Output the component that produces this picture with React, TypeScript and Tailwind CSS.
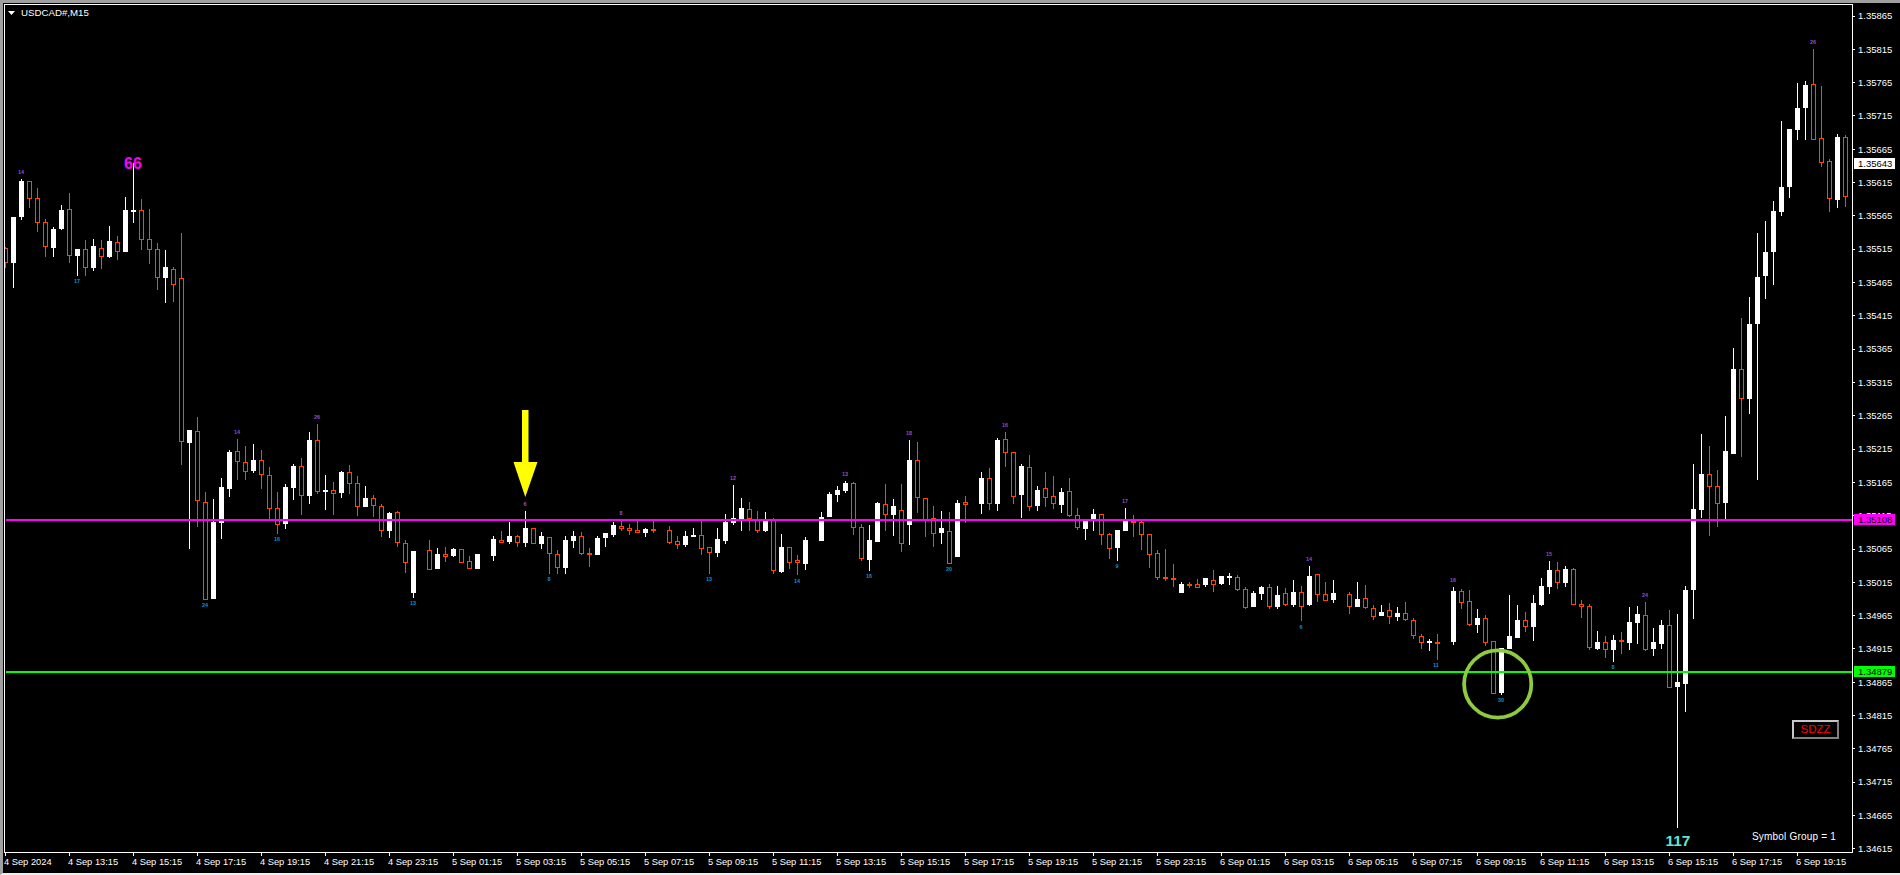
const W = 1, O = 0;
type C = [number, number, number, number, number, number];
// [type, centre x, high, body top, body bottom, low]
const candles: C[] = [
[O,5,247,248,263,268],[W,13,217,217,263,288],[W,21,179,181,217,220],[O,29,181,181,199,208],[O,37,188,198,223,232],[O,45,219,222,247,257],[W,53,227,229,248,257],[W,61,205,210,229,230],[O,69,193,209,256,263],[W,77,249,249,256,276],[O,85,240,249,268,276],[W,93,239,246,268,271],[O,101,240,248,257,269],[W,109,226,241,257,258],[O,117,236,242,252,260],[W,125,197,210,252,252],[W,133,163,210,212,223],[O,141,199,210,240,250],[O,149,209,239,250,264],[O,157,243,249,278,290],[W,165,250,267,278,303],[O,173,267,269,285,302],[O,181,233,278,442,465],[W,189,430,430,443,549],[O,197,417,431,501,527],[O,205,492,502,600,600],[W,213,499,522,599,599],[W,221,478,487,523,539],[W,229,450,452,489,497],[O,237,439,451,462,480],[O,245,446,462,472,480],[W,253,444,460,471,473],[O,261,450,460,475,489],[O,269,467,475,509,520],[O,277,492,508,525,534],[W,285,484,487,524,529],[W,293,464,466,488,500],[O,301,458,466,496,515],[W,309,432,440,496,504],[O,317,424,440,492,494],[W,325,475,490,492,510],[O,333,482,490,494,515],[W,341,471,472,493,498],[O,349,465,472,484,494],[O,357,476,483,507,516],[W,365,486,498,507,507],[O,373,495,498,506,517],[O,381,504,506,531,537],[W,389,512,513,531,538],[O,397,511,512,543,547],[O,405,540,543,563,573],[W,413,551,551,593,598],
[O,429,540,550,570,570],[W,437,548,554,569,569],[O,445,547,554,557,562],[W,453,548,549,556,557],[O,461,549,549,563,563],[O,469,556,561,569,569],[W,477,554,554,569,569],
[W,493,536,539,556,561],[O,501,531,540,543,543],[W,509,522,536,542,544],[O,517,535,536,543,547],[W,525,511,528,543,547],[O,533,528,528,544,544],[W,541,532,536,544,549],[O,549,537,537,554,574],[O,557,550,554,568,574],[W,565,536,540,568,574],[W,573,531,536,541,548],[O,581,532,536,554,555],[O,589,548,553,555,567],[W,597,536,538,555,555],[W,605,533,533,538,547],[W,613,522,525,535,537],[O,621,521,526,529,531],[O,629,524,528,531,535],[O,637,520,530,533,533],[W,645,528,529,533,537],[O,653,521,529,531,533],
[O,669,526,530,543,544],[O,677,536,541,545,549],[W,685,531,536,545,547],[W,693,528,535,537,537],[O,701,520,535,549,555],[O,709,547,547,553,574],[W,717,528,539,553,557],[W,725,514,522,541,544],[W,733,485,518,523,525],[W,741,498,508,520,531],[O,749,502,509,519,531],[O,757,511,519,531,533],[W,765,512,521,531,532],[O,773,518,520,571,574],[W,781,534,547,572,573],[O,789,547,547,563,569],[O,797,555,560,563,575],[W,805,537,540,564,570],
[W,821,512,517,541,541],[W,829,492,494,517,517],[W,837,486,490,495,502],[W,845,481,483,491,493],[O,853,482,483,528,535],[O,861,524,527,559,561],[W,869,525,540,560,571],[W,877,502,503,542,542],[O,885,484,504,515,531],[W,893,499,506,515,536],[O,901,484,510,544,552],[W,909,440,460,525,545],[O,917,442,460,498,513],[O,925,498,498,520,537],[O,933,506,518,534,547],[W,941,511,528,533,544],[O,949,512,531,564,564],[W,957,500,503,557,557],[O,965,496,502,505,523],
[W,981,472,478,504,514],[O,989,468,478,504,510],[W,997,438,440,504,511],[O,1005,432,439,453,467],[O,1013,452,452,497,504],[W,1021,464,466,495,518],[O,1029,455,467,507,511],[W,1037,486,490,506,511],[O,1045,472,488,498,507],[O,1053,476,496,504,509],[W,1061,488,492,505,513],[O,1069,478,491,516,517],[O,1077,508,515,528,530],[W,1085,520,520,529,540],[W,1093,509,514,521,531],[O,1101,514,514,535,545],[O,1109,533,534,549,559],[W,1117,530,530,548,561],[W,1125,508,520,531,531],[O,1133,515,521,523,537],[O,1141,521,522,535,550],[O,1149,534,534,555,568],[O,1157,550,553,578,580],[O,1165,549,577,579,581],[O,1173,564,578,580,587],[W,1181,582,584,593,593],[O,1189,582,584,586,588],[O,1197,579,584,588,588],[W,1205,578,578,585,587],[O,1213,570,580,585,592],[W,1221,576,576,584,585],[W,1229,573,576,578,585],[O,1237,575,577,590,591],[O,1245,587,589,608,609],[W,1253,591,593,607,607],[W,1261,586,587,594,600],[O,1269,584,587,607,609],[W,1277,586,595,607,609],[O,1285,588,593,605,606],[W,1293,580,592,605,607],[O,1301,586,592,607,621],[W,1309,566,576,605,606],[O,1317,574,574,595,602],[O,1325,582,594,601,601],[W,1333,580,593,600,603],
[O,1349,592,594,607,614],[W,1357,582,599,607,607],[O,1365,585,598,608,609],[O,1373,605,608,617,620],[W,1381,605,612,616,616],[O,1389,603,610,617,624],[W,1397,607,613,617,621],[O,1405,602,613,620,621],[O,1413,618,620,636,639],[O,1421,634,636,643,649],[W,1429,639,641,643,651],[O,1437,634,642,643,660],
[W,1453,587,591,642,645],[O,1461,589,591,603,609],[O,1469,590,601,625,626],[W,1477,609,618,625,633],[O,1485,615,618,643,646],[O,1493,641,641,694,694],[W,1501,648,648,693,695],[W,1509,595,636,649,649],[W,1517,605,620,638,638],[O,1525,612,620,627,632],[W,1533,595,603,627,641],[W,1541,578,586,605,606],[W,1549,561,570,587,594],[O,1557,562,570,583,589],[W,1565,566,569,583,587],[O,1573,568,569,605,605],[O,1581,600,604,607,618],[O,1589,604,606,648,650],[W,1597,631,642,649,650],[O,1605,636,642,650,658],[W,1613,635,640,650,662],[O,1621,632,640,642,654],[W,1629,607,622,643,650],[W,1637,606,614,623,644],[O,1645,602,615,650,651],[W,1653,628,642,649,656],[W,1661,620,625,644,649],[O,1669,610,625,688,688],[W,1677,614,682,687,828],[W,1685,586,590,684,712],[W,1693,464,509,590,619],[W,1701,434,474,510,518],[O,1709,446,474,487,536],[O,1717,470,486,504,527],[W,1725,416,451,503,520],[W,1733,348,369,454,454],[O,1741,318,369,399,457],[W,1749,297,324,399,414],[W,1757,233,277,324,480],[W,1765,221,252,276,299],[W,1773,201,211,252,285],[W,1781,121,187,212,216],[W,1789,129,129,187,198],[W,1797,83,108,130,140],[W,1805,81,85,108,140],[O,1813,49,84,140,140],[O,1821,86,138,163,167],[O,1829,159,161,199,212],[W,1837,134,137,200,208],[O,1845,135,137,197,207],
];

const topLabels: [number, number, string][] = [
[21,174,"14"],[237,434,"14"],[317,419,"26"],[525,506,"6"],[621,515,"8"],[733,480,"12"],[845,476,"13"],[909,435,"18"],[1005,427,"16"],[1125,503,"17"],[1309,561,"14"],[1453,582,"16"],[1549,556,"15"],[1645,597,"24"],[1813,44,"26"],
];
const bottomLabels: [number, number, string][] = [
[77,283,"17"],[277,541,"16"],[205,607,"24"],[413,605,"13"],[549,581,"8"],[709,581,"13"],[797,583,"14"],[869,578,"16"],[949,571,"20"],[1117,568,"9"],[1301,629,"6"],[1436,667,"11"],[1501,702,"30"],[1613,669,"8"],
];

const prices = Array.from({ length: 26 }, (_, i) => (1.35865 - i * 0.0005).toFixed(5));
const times = [
  "4 Sep 2024","4 Sep 13:15","4 Sep 15:15","4 Sep 17:15","4 Sep 19:15","4 Sep 21:15","4 Sep 23:15",
  "5 Sep 01:15","5 Sep 03:15","5 Sep 05:15","5 Sep 07:15","5 Sep 09:15","5 Sep 11:15","5 Sep 13:15","5 Sep 15:15","5 Sep 17:15","5 Sep 19:15","5 Sep 21:15","5 Sep 23:15",
  "6 Sep 01:15","6 Sep 03:15","6 Sep 05:15","6 Sep 07:15","6 Sep 09:15","6 Sep 11:15","6 Sep 13:15","6 Sep 15:15","6 Sep 17:15","6 Sep 19:15",
];

const ORANGE = "#ff4500";
const FONT = "'Liberation Sans', sans-serif";

function Candle({ c }: { c: C }) {
  const [t, x, h, top, bot, l] = c;
  const color = t === W ? "#ffffff" : ORANGE;
  return (
    <g shapeRendering="crispEdges">
      <rect x={x} y={h} width={1} height={Math.max(l - h, 1)} fill={color} />
      {t === W ? (
        <rect x={x - 2} y={top} width={5} height={Math.max(bot - top, 2)} fill="#ffffff" />
      ) : (
        <rect x={x - 1.5} y={top + 0.5} width={4} height={Math.max(bot - top - 1, 1)} fill="#000000" stroke={ORANGE} strokeWidth={1} />
      )}
    </g>
  );
}

function PriceTag({ top, bg, label }: { top: string; bg: string; label: string }) {
  return (
    <div className={`absolute left-px w-[41px] h-[11px] pl-[4px] flex items-center text-black text-[9.5px] leading-none ${top} ${bg}`}>
      {label}
    </div>
  );
}

export default function App() {
  return (
    <div className="w-[1900px] h-[875px] overflow-hidden bg-black border-t-[3px] border-l-[3px] border-b-[2px] border-t-[#a0a0a0] border-l-[#a0a0a0] border-b-[#f0f0f0] font-['Liberation_Sans',sans-serif] text-white">
      <div className="flex pt-px pl-px">
        <div className="w-[1849px] shrink-0 flex flex-col">
          <div className="relative h-[849px] border border-white">
            <div className="absolute left-[3px] top-[3px] flex items-center gap-[6px] z-10">
              <svg width="7" height="4" viewBox="0 0 7 4" className="block">
                <path d="M0 0H7L3.5 4Z" fill="#ffffff" />
              </svg>
              <span className="text-[9.7px] leading-[10px]">USDCAD#,M15</span>
            </div>
            <div className="absolute left-[1787px] top-[715px] w-[47px] h-[19px] border-2 border-t-[#c8c8c8] border-l-[#c8c8c8] border-r-[#808080] border-b-[#808080] flex items-center justify-center text-[#ff0000] text-[11.5px] leading-none">
              SDZZ
            </div>
            <div className="absolute left-[1747px] top-[826px] text-[10px] tracking-[0.2px] leading-[12px] whitespace-nowrap">Symbol Group = 1</div>
            <svg width={1847} height={847} viewBox="5 5 1847 847" className="block">
              {candles.map((c, i) => (
                <Candle key={i} c={c} />
              ))}
              <rect x={6} y={519} width={1846} height={2} fill="#ff00ff" shapeRendering="crispEdges" />
              <rect x={6} y={671} width={1846} height={2} fill="#00ff00" shapeRendering="crispEdges" />
              <circle cx={1497.7} cy={684} r={33.6} fill="none" stroke="#8ecb3f" strokeWidth={3.8} />
              <path d="M522 410H528.5V462H537.5L525.3 497L513.5 462H522Z" fill="#ffff00" />
              {topLabels.map(([x, y, s], i) => (
                <text key={i} x={x} y={y} textAnchor="middle" fontSize={5.5} fontWeight={700} fontFamily={FONT} fill="#8a4fd8">{s}</text>
              ))}
              {bottomLabels.map(([x, y, s], i) => (
                <text key={i} x={x} y={y} textAnchor="middle" fontSize={5.5} fontWeight={700} fontFamily={FONT} fill="#0a8fd8">{s}</text>
              ))}
              <text x={133} y={168.5} textAnchor="middle" fontSize={16} fontWeight={700} fontFamily={FONT} fill="#ff00ff">66</text>
              <text x={1678} y={846} textAnchor="middle" fontSize={15.5} fontWeight={700} fontFamily={FONT} fill="#5fe8d0">117</text>
            </svg>
          </div>
          <div className="flex pl-px">
            {times.map((t) => (
              <div key={t} className="w-[64px] shrink-0 flex flex-col">
                <div className="w-px h-[3px] bg-white" />
                <span className="-ml-px text-[9.3px] leading-[12px] whitespace-nowrap">{t}</span>
              </div>
            ))}
          </div>
        </div>
        <div className="relative flex-1 pt-[6px]">
          <div className="h-[845px] flex flex-col justify-between">
            {prices.map((p) => (
              <div key={p} className="h-[12px] flex items-center gap-[3px]">
                <div className="w-[2px] h-px bg-white" />
                <span className="text-[9.5px] leading-none">{p}</span>
              </div>
            ))}
          </div>
          <PriceTag top="top-[154px]" bg="bg-white" label="1.35643" />
          <PriceTag top="top-[510px]" bg="bg-[#ff00ff]" label="1.35108" />
          <PriceTag top="top-[662px]" bg="bg-[#00ff00]" label="1.34879" />
        </div>
      </div>
    </div>
  );
}
